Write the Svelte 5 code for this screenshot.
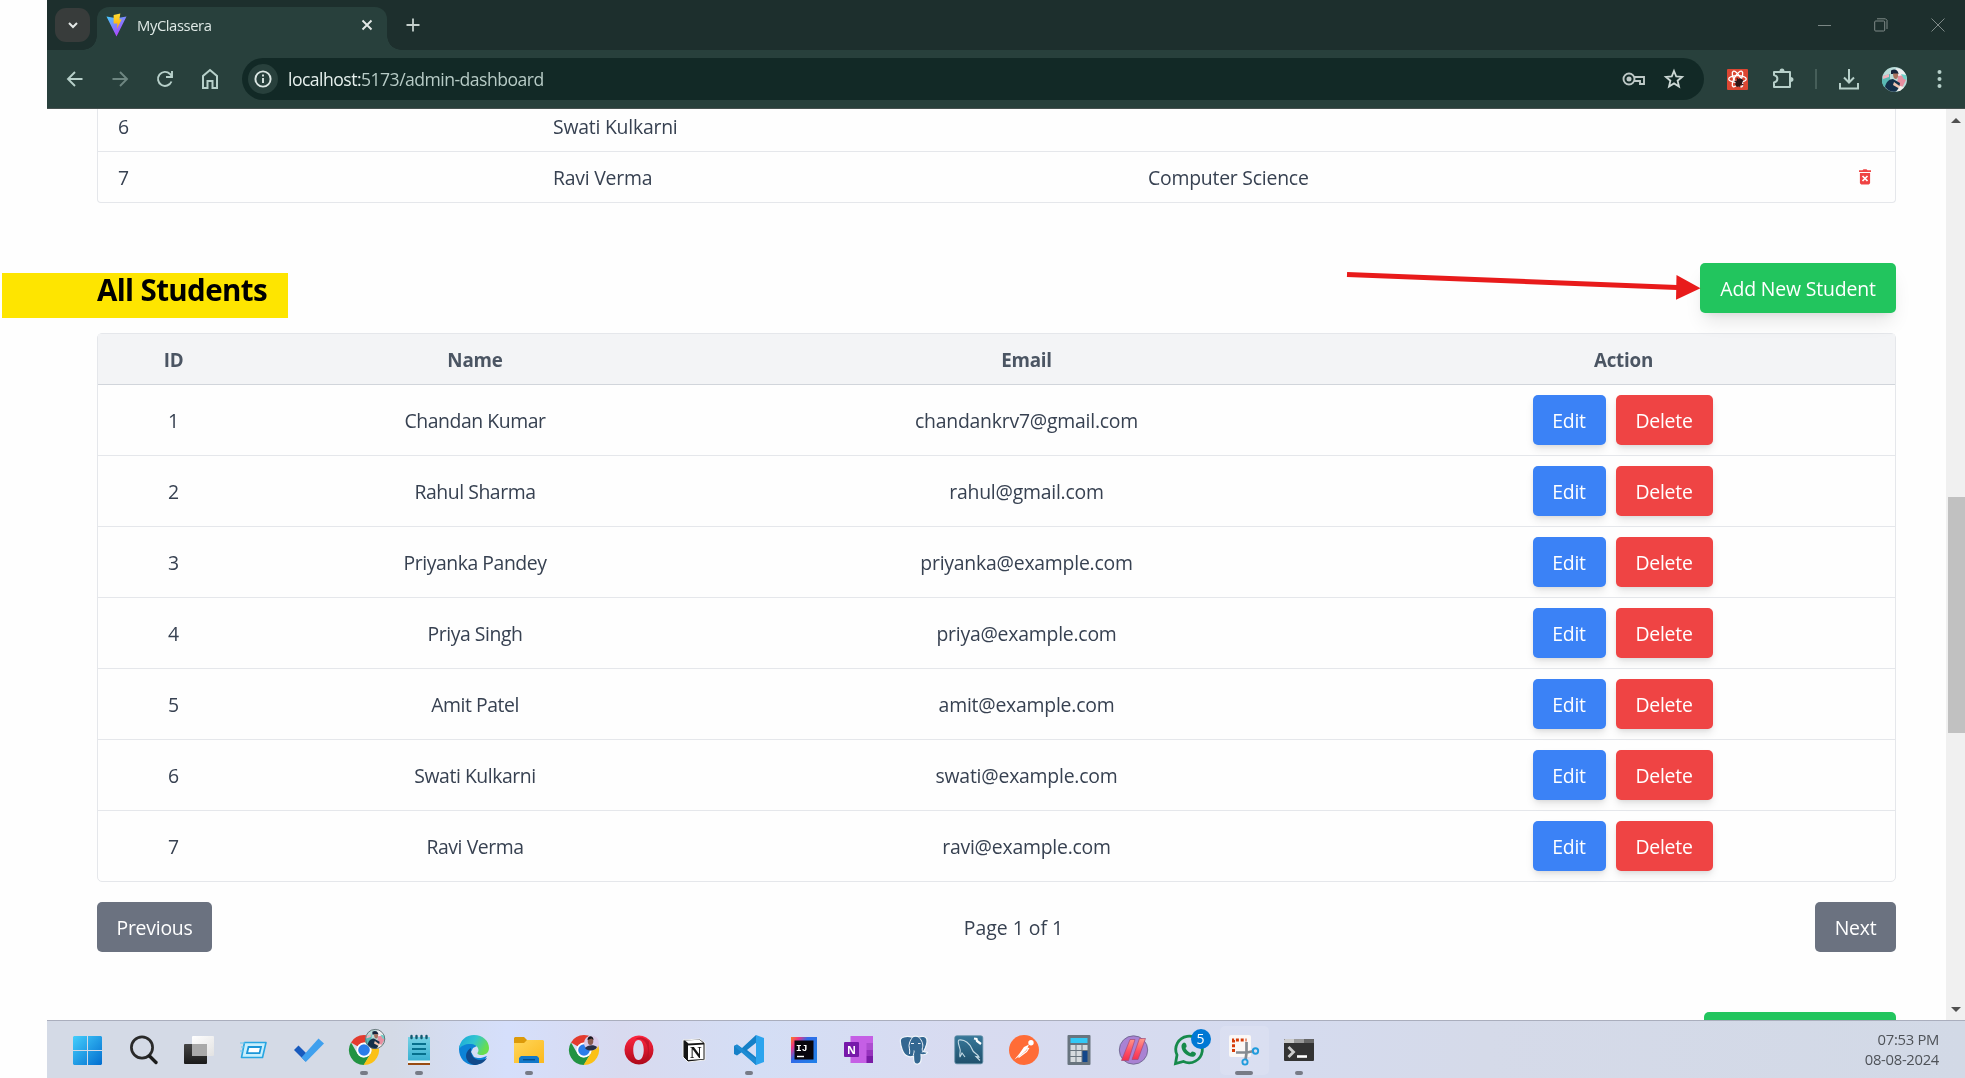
<script>
  const students = [
    { id: 1, name: 'Chandan Kumar', email: 'chandankrv7@gmail.com' },
    { id: 2, name: 'Rahul Sharma', email: 'rahul@gmail.com' },
    { id: 3, name: 'Priyanka Pandey', email: 'priyanka@example.com' },
    { id: 4, name: 'Priya Singh', email: 'priya@example.com' },
    { id: 5, name: 'Amit Patel', email: 'amit@example.com' },
    { id: 6, name: 'Swati Kulkarni', email: 'swati@example.com' },
    { id: 7, name: 'Ravi Verma', email: 'ravi@example.com' }
  ];

  const apps = [
    { icon: 'start' },
    { icon: 'search' },
    { icon: 'taskview' },
    { icon: 'run' },
    { icon: 'todo' },
    { icon: 'chromeA', open: true },
    { icon: 'notepad', open: true },
    { icon: 'edge' },
    { icon: 'folder', open: true },
    { icon: 'chromeB' },
    { icon: 'opera' },
    { icon: 'notion' },
    { icon: 'vscode', open: true },
    { icon: 'idea' },
    { icon: 'onenote' },
    { icon: 'postgres' },
    { icon: 'mysql' },
    { icon: 'postman' },
    { icon: 'calc' },
    { icon: 'slashes' },
    { icon: 'whatsapp' },
    { icon: 'snip', open: true, active: true },
    { icon: 'terminal', open: true }
  ];
</script>

{#snippet chrome()}
  <path d="M15 0A15 15 0 0 1 28 7.500H15L8.500 11.300 2 7.500A15 15 0 0 1 15 0Z" fill="#e33b2e" />
  <path d="M2 7.500 8.500 18.800A7.500 7.500 0 0 0 15 22.500L15 30A15 15 0 0 1 2 7.500Z" fill="#229342" />
  <path d="M15 22.500 21.500 18.800 15 30Z" fill="#229342" />
  <path d="M28 7.500A15 15 0 0 1 14.600 30L21.500 18.800A7.500 7.500 0 0 0 21.500 11.200L15 7.500Z" fill="#fbc116" />
  <circle cx="15" cy="15" r="7.500" fill="#fff" />
  <circle cx="15" cy="15" r="5.800" fill="#2b7de9" />
{/snippet}

{#snippet portrait()}
  <circle cx="12.500" cy="12.500" r="12.500" fill="#b9dcd9" />
  <path d="M14 1a12 12 0 0 1 10 7l-8 3Z" fill="#f0eef0" />
  <path d="M1 9 8 7v10l-6 3A12 12 0 0 1 1 9Z" fill="#59b9b4" />
  <path d="M1 9 7 7v3l-6 2Z" fill="#f2b3bd" />
  <path d="M16 9l6-1 2 5-4 8-5-3Z" fill="#e78fa0" />
  <path d="m19 7 5 1 .8 5-3-1Z" fill="#72d1c9" />
  <path d="M9 3.500c3-2 6-1 7 1.500l.5 2H9Z" fill="#17243b" />
  <path d="M11 6.500h5c.5 4-1 5.500-2.500 5.500s-2.500-2.500-2.500-5.500Z" fill="#a8735f" />
  <path d="M3 20c1-5 4-8 8-8l7 4-1 5-3 3.500c-4 .9-8-.5-11-4.500Z" fill="#15304a" />
  <path d="m12 15 7 5-1 2-7-4Z" fill="#f0c5b2" />
  <path d="m18 19 4 1-4 4h-3Z" fill="#f4efeb" />
{/snippet}

{#snippet appIcon(name)}
  <svg viewBox="0 0 30 30" width="30" height="30">
    {#if name === 'start'}
      <defs>
        <linearGradient id="win" gradientUnits="userSpaceOnUse" x1="0" y1="0" x2="29" y2="29">
          <stop offset="0" stop-color="#45d0fd" /><stop offset="1" stop-color="#036fd0" />
        </linearGradient>
      </defs>
      <path d="M0 2 1 1h13v14H0ZM15 1h13l1 1v13H15ZM0 16h14v14H1l-1-1ZM15 16h14v13l-1 1H15Z" fill="url(#win)" />
    {:else if name === 'search'}
      <circle cx="13" cy="12.500" r="10.600" fill="none" stroke="#2a2a2a" stroke-width="2.700" />
      <path d="m20.500 21 6.500 6.500" stroke="#1c1c1c" stroke-width="3.400" stroke-linecap="round" />
    {:else if name === 'taskview'}
      <defs>
        <linearGradient id="tvDark" x1="0" y1="0" x2="0" y2="1"><stop offset="0" stop-color="#454545" /><stop offset="1" stop-color="#1a1a1a" /></linearGradient>
        <linearGradient id="tvLight" x1="0" y1="0" x2="1" y2="1"><stop offset="0" stop-color="#fff" /><stop offset="1" stop-color="#e2e2e2" /></linearGradient>
      </defs>
      <rect x="0" y="9" width="23" height="20" rx="1" fill="url(#tvDark)" />
      <rect x="8" y="1" width="22" height="20" rx="1" fill="url(#tvLight)" />
      <rect x="8" y="9" width="15" height="12" fill="#a9a9a9" />
    {:else if name === 'run'}
      <path d="M5.500 7.500h21.500l-3.500 15H2.500Z" fill="#c8effd" stroke="#27a6e2" stroke-width="1.600" stroke-linejoin="round" />
      <path d="M9.500 12h12.500l-1.500 6.200H8Z" fill="#fff" stroke="#1b96d8" stroke-width="1.800" />
      <path d="M1 8h5M2 12h3M1 16h3" stroke="#69c7ef" stroke-width="1.200" />
    {:else if name === 'todo'}
      <path d="m0 15 4.500-4.500 11.500 11.500-4.500 4.500Z" fill="#185abd" />
      <path d="M7.500 22.500 24.500 3.500 30 8.500 11.800 27Z" fill="#3fa0ee" />
    {:else if name === 'chromeA'}
      {@render chrome()}
      <g transform="translate(16.200 -6) scale(.8)">{@render portrait()}
        <circle cx="12.500" cy="12.500" r="12" fill="none" stroke="#555e66" stroke-width="1" /></g>
    {:else if name === 'chromeB'}
      {@render chrome()}
      <circle cx="22.500" cy="8" r="7.500" fill="#d8cbe8" />
      <ellipse cx="21.500" cy="6" rx="2.800" ry="4" fill="#8d5c50" />
      <path d="M18.500 5c0-5 6-5 6 0l-2-1.500Z" fill="#15151c" />
      <path d="M16 13c2-3 9-4 12-1-1 4-9 5-12 1Z" fill="#292f45" />
    {:else if name === 'notepad'}
      <defs><linearGradient id="np" x1="0" y1="0" x2="0" y2="1"><stop offset="0" stop-color="#76d2e5" /><stop offset="1" stop-color="#35aed0" /></linearGradient></defs>
      <path d="M4 2h22v25H4Z" fill="url(#np)" />
      <path d="M4 25.500h22V28H4Z" fill="#f4f4f1" /><path d="M4 28h22v2H4Z" fill="#984b13" />
      <path d="M8 9h14M8 14h14M8 19h14" stroke="#06708d" stroke-width="1.800" />
      <path d="M7.500 1v2M12.500 1v2M17.500 1v2M22.500 1v2" stroke="#145a71" stroke-width="2.400" stroke-linecap="round" />
    {:else if name === 'edge'}
      <defs>
        <linearGradient id="edgeTop" x1="0" y1="0" x2="1" y2=".4">
          <stop offset="0" stop-color="#17a6dd" /><stop offset=".55" stop-color="#32c5cf" /><stop offset="1" stop-color="#68de4d" />
        </linearGradient>
      </defs>
      <path d="M0 14C0 8 6 4 13 7l5 4-4 2-2 4 3 5c5 2 8 1 13-1-3 6-8 9-13 9C6 30 0 23 0 14Z" fill="#0c83d7" />
      <path d="M0 14C1 5 7 0 15 0c9 0 15 6 15 13 0 5-4 7-7 7-5 0-5-2-4-3 2-3-2-9-8-8-5 0-9 2-11 5Z" fill="url(#edgeTop)" />
      <path d="M12 13c-1 7 3 12 9 12 3 0 5-1 7-2-3 5-8 7-13 7C5 27 5 17 12 13Z" fill="#114a8b" />
    {:else if name === 'folder'}
      <defs><linearGradient id="fold" x1="0" y1="0" x2="1" y2="1"><stop offset="0" stop-color="#ffd65a" /><stop offset="1" stop-color="#fcb91d" /></linearGradient></defs>
      <path d="M0 3 1 2h9l3 3v5H0Z" fill="#dc9a0a" />
      <path d="M0 8h10l3-3h16l1 1v22H0Z" fill="url(#fold)" />
      <path d="M5 28v-5l2-2h16l2 2v5Z" fill="#1279ca" /><path d="M9 24.700h12" stroke="#064c87" stroke-width="1.300" />
    {:else if name === 'opera'}
      <defs>
        <linearGradient id="op" x1="0" y1="0" x2="0" y2="1"><stop offset="0" stop-color="#ff2741" /><stop offset="1" stop-color="#ad0819" /></linearGradient>
      </defs>
      <path fill-rule="evenodd" d="M15 .5a14.500 14.500 0 1 1-.01 0ZM14.500 5C7.500 5 7.500 25 14.500 25S21.500 5 14.500 5Z" fill="url(#op)" />
      <path d="M11 4.500c4-4 10-2 14 2v17c-4 4-9 6-14 2 9 3 13-4 13-10S20 2 11 4.500Z" fill="#b50f24" opacity=".65" />
    {:else if name === 'notion'}
      <path d="m4 5 17-1 5 4v17l-17 2-5-5Z" fill="#161616" stroke="#f5f5f5" stroke-width="1" />
      <path d="m6 5.500 14.500-.8 3.500 3-14.500.8Z" fill="#fff" /><path d="M9 10.500 24.500 9.500v14.500L9 25Z" fill="#fff" />
      <text x="16.800" y="22.700" text-anchor="middle" font-family="Liberation Serif, serif" font-weight="bold" font-size="16" fill="#161616">N</text>
    {:else if name === 'vscode'}
      <path d="M22 0 8 13 3 9.500 0 11v8l3 1.500L8 17l14 13 1-7-10-8 10-8Z" fill="#1580c7" />
      <path d="M0 11 3 9.500 23 25l-1 5Z" fill="#1d8bd3" />
      <path d="m22 0 8 3v24l-8 3Z" fill="#2ba4ee" />
    {:else if name === 'idea'}
      <defs>
        <linearGradient id="ij" x1="0" y1="0" x2="1" y2=".7"><stop offset="0" stop-color="#fc801d" /><stop offset=".22" stop-color="#ec3384" /><stop offset=".45" stop-color="#316be8" /><stop offset="1" stop-color="#227ee8" /></linearGradient>
      </defs>
      <path d="M2 2h26v26H2Z" fill="url(#ij)" /><path d="M5.500 5.500h19v19h-19Z" fill="#08050d" />
      <text x="7" y="15.500" font-family="Liberation Mono, monospace" font-weight="bold" font-size="9.500" fill="#fff">IJ</text>
      <path d="M8 21.500h7" stroke="#fff" stroke-width="1.400" />
    {:else if name === 'onenote'}
      <path d="M6.500 1H29v27H6.500Z" fill="#c55fe5" /><path d="M22.500 8H29v7h-6.500Z" fill="#ad4dd0" /><path d="M22.500 15H29v6h-6.500Z" fill="#9633bd" /><path d="M22.500 21H29v7h-6.500Z" fill="#791ca5" />
      <rect x="0" y="7" width="15" height="15" rx="1" fill="#7719aa" />
      <text x="7.500" y="18.500" text-anchor="middle" font-family="Open Sans, sans-serif" font-weight="bold" font-size="11" fill="#fff">N</text>
    {:else if name === 'postgres'}
      <path d="M5 2c3-1 6-.5 8 .2C15 1 18 1 20 2c3-1.500 7-.5 7.800 2 .8 3-1.300 9-3.300 12.500l4 1c-1 2-4 2.500-6.500 2 .5 4 0 9-3 9.500-4 .5-4.500-2-4.500-8-2 1-4.500 1-6 0C4 20 1.500 11 1.300 6 1.200 4 3 2.500 5 2Z" fill="#336791" stroke="#f1f5fb" stroke-width="1.200" />
      <path d="M10.500 19c1-4-1.500-8 0-11 .5-2 1.500-4 3-5.500M20 2.500c3 3 4.500 7 3.500 10-.8 2.500.5 3.500-.3 5M14.500 20c0-2 1-3 .5-4.500" fill="none" stroke="#f1f5fb" stroke-width="1" />
      <path d="M12 8.500h3M19 8.500h2.500" stroke="#f1f5fb" stroke-width="1.200" />
    {:else if name === 'mysql'}
      <defs><linearGradient id="my" x1="0" y1="0" x2="0" y2="1"><stop offset="0" stop-color="#38789a" /><stop offset="1" stop-color="#20506c" /></linearGradient></defs>
      <rect x=".8" y=".8" width="28" height="28" rx="2" fill="url(#my)" stroke="#5d8ba3" stroke-width=".8" />
      <path d="M6 22c-1-3 1-5 0-8C5 10 3 6 5 5c6-1 11 4 13 9 1 4 5 4 7 8l-3-.5 4 4M6 22l2-4 3 4" fill="none" stroke="#c6dbe5" stroke-width="1.100" />
      <path d="m20 3.500 2.500.5.500 2 4 3" stroke="#fff" stroke-width="2.200" fill="none" />
    {:else if name === 'postman'}
      <circle cx="15" cy="15" r="15" fill="#ff6c37" />
      <circle cx="22" cy="7.700" r="2.700" fill="#fff" /><path d="m20 9.500-5 2.500-4.500 6.500-5 6 7-5 5-4.500Z" fill="#fff" /><path d="m15 12.500 4.500 1-2 3-8 6" fill="none" stroke="#fff" stroke-width="1.200" />
    {:else if name === 'calc'}
      <rect x="3.500" y="0" width="23" height="30" rx="1" fill="#68747e" /><path d="M6.500 3h17v5h-17Z" fill="#33c9f5" />
      <path d="M6.500 10h5v5h-5Zm6 0h5v5h-5Zm6 0h5v5h-5Zm-12 6h5v5h-5Zm6 0h5v5h-5Zm-6 6h5v5h-5Zm6 0h5v5h-5Z" fill="#d5dade" /><path d="M18.500 16h5v11h-5Z" fill="#12468a" />
    {:else if name === 'slashes'}
      <defs><linearGradient id="sl" x1="0" y1="0" x2="0" y2="1"><stop offset="0" stop-color="#ff9a8c" /><stop offset=".6" stop-color="#ff4d62" /><stop offset="1" stop-color="#f3304f" /></linearGradient></defs>
      <circle cx="14.500" cy="15" r="14.200" fill="#a982d3" stroke="#666087" stroke-width=".8" />
      <path d="M11 4.500h5L9.500 25.500H2.500ZM20.500 3.500h6L19 24.500h-6Z" fill="url(#sl)" stroke="#a44a78" stroke-width=".7" />
    {:else if name === 'whatsapp'}
      <path d="M3 20A13.300 13.300 0 1 1 9.500 26.500L1.500 28.500Z" fill="none" stroke="#168a4b" stroke-width="2.800" />
      <path d="M10 7.500c2 0 3 3 2.500 4.500l-1 1c1 2.500 3 4 5 5l1.500-1.500c2 0 4 1 4 2.500-1 3-4 3.500-7 2-4-1.500-7-5-7.500-9-.2-2 .7-4 2.500-4.500Z" fill="#168a4b" />
    {:else if name === 'snip'}
      <rect x="0" y="0" width="22" height="22" rx="2" fill="#fbf8f6" />
      <path d="M4.500 17V5h13" fill="none" stroke="#d63b07" stroke-width="3" stroke-dasharray="3 1.800" />
      <path d="M17.500 7v11l-1 7M7 17.500h11l7-1.500" fill="none" stroke="#858b91" stroke-width="2.700" />
      <circle cx="26.500" cy="16" r="2.700" fill="none" stroke="#209cdd" stroke-width="1.900" /><circle cx="16" cy="27" r="2.600" fill="none" stroke="#209cdd" stroke-width="1.900" />
    {:else if name === 'terminal'}
      <rect x="0" y="4" width="30" height="22" rx="1" fill="#333" />
      <path d="M0 8V5l1-1h9v4Z" fill="#ccc" /><path d="M10 4h10v4H10Z" fill="#999" /><path d="M20 4h9l1 1v3H20Z" fill="#666" />
      <path d="m4.500 12 5 5-5 5" fill="none" stroke="#ccc" stroke-width="2.800" /><path d="M13 21.500h10" stroke="#fff" stroke-width="2.600" />
    {/if}
  </svg>
{/snippet}

<div class="screen">
  <div class="desktop">
    <header class="tabstrip">
      <button class="tabsearch" aria-label="Search tabs">
        <svg width="12" height="12" viewBox="0 0 12 12"><path d="m2 4 4 4 4-4" fill="none" stroke="#e4e9e7" stroke-width="2" /></svg>
      </button>
      <div class="tab">
        <svg width="21" height="24" viewBox="0 0 22 24">
          <defs>
            <linearGradient id="viteA" x1="0" y1="0" x2=".7" y2="1"><stop offset="0" stop-color="#41d1ff" /><stop offset="1" stop-color="#bd34fe" /></linearGradient>
            <linearGradient id="viteB" x1="0" y1="0" x2="0" y2="1"><stop offset="0" stop-color="#ffdd35" /><stop offset="1" stop-color="#ffa800" /></linearGradient>
          </defs>
          <path d="M.5 3 11 5l10.500-2L11 24Z" fill="url(#viteA)" />
          <path d="m8 1.500 7-1.500-1 6.500 2.500-.5-5 10 .5-5.500H8Z" fill="url(#viteB)" />
        </svg>
        <span class="tabtitle">MyClassera</span>
        <svg class="tabclose" width="12" height="12" viewBox="0 0 12 12"><path d="m1.500 1.500 9 9M10.500 1.500l-9 9" stroke="#e4e9e7" stroke-width="1.900" /></svg>
      </div>
      <svg class="newtab" width="14" height="14" viewBox="0 0 14 14"><path d="M7 .5v13M.5 7h13" stroke="#c5d0cc" stroke-width="1.800" /></svg>
      <div class="wincontrols">
        <svg width="14" height="14" viewBox="0 0 14 14"><path d="M1 7.500h13" stroke="#7b8785" /></svg>
        <svg width="14" height="14" viewBox="0 0 14 14" fill="none" stroke="#7f8a88"><rect x=".7" y="3" width="10" height="10" rx="1" /><path d="M3 .8h8.500l1.500 1.500V11" /></svg>
        <svg width="14" height="14" viewBox="0 0 14 14"><path d="m.5.5 13 13M13.500.5l-13 13" stroke="#7f8a88" /></svg>
      </div>
    </header>

    <div class="toolbar">
      <div class="nav">
        <svg width="20" height="20" viewBox="0 0 20 20" fill="none" stroke="#b7d0ca" stroke-width="1.900"><path d="M17.500 10H3.500M10 3l-7 7 7 7" /></svg>
        <svg width="20" height="20" viewBox="0 0 20 20" fill="none" stroke="#6e8681" stroke-width="1.900"><path d="M2.500 10h14M10 3l7 7-7 7" /></svg>
        <svg width="20" height="20" viewBox="0 0 20 20" fill="none" stroke="#b7d0ca" stroke-width="1.900"><path d="M16.500 12.500A7 7 0 1 1 15 5l2 2.500" /><path d="M17 2v6h-6" /></svg>
        <svg width="20" height="22" viewBox="0 0 20 22" fill="none" stroke="#b7d0ca" stroke-width="2"><path d="M3 20V8l7-6 7 6v12h-4.500v-7h-5v7Z" /></svg>
      </div>
      <div class="omnibox">
        <span class="siteinfo">
          <svg width="18" height="18" viewBox="0 0 18 18"><circle cx="9" cy="9" r="7.600" fill="none" stroke="#dce7e4" stroke-width="1.900" /><path d="M9 8v5M9 4.500v2" stroke="#dce7e4" stroke-width="1.900" /></svg>
        </span>
        <span class="url"><b>localhost:</b>5173/admin-dashboard</span>
        <svg class="key" width="24" height="16" viewBox="0 0 24 16"><circle cx="7" cy="8" r="5.500" fill="none" stroke="#bdc8c6" stroke-width="1.900" /><circle cx="7" cy="8" r="2.500" fill="#bdc8c6" /><path d="M12 6h10v7h-4v-3h-6" fill="none" stroke="#bdc8c6" stroke-width="1.900" /></svg>
        <svg width="20" height="20" viewBox="0 0 20 20"><path d="m10 2 2.200 5.400 5.900.5-4.500 3.800 1.400 5.800L10 14.400l-5 3.100 1.400-5.800L1.900 7.900l5.900-.5Z" fill="none" stroke="#ccd8d5" stroke-width="1.800" /></svg>
      </div>
      <div class="exts">
        <svg width="21" height="21" viewBox="0 0 21 21">
          <rect width="21" height="21" rx="1" fill="#dc4632" />
          <g fill="none" stroke="#fff" stroke-width="1.300"><ellipse cx="10.500" cy="10" rx="8.800" ry="3.300" /><ellipse cx="10.500" cy="10" rx="8.800" ry="3.300" transform="rotate(60 10.500 10)" /><ellipse cx="10.500" cy="10" rx="8.800" ry="3.300" transform="rotate(120 10.500 10)" /></g>
          <ellipse cx="12" cy="13.500" rx="3" ry="4.500" fill="#2d1719" transform="rotate(35 12 13.500)" /><path d="m7.500 12 9 4M9 17l7-6M10 9l3 9" stroke="#2d1719" stroke-width="1.200" />
        </svg>
        <svg class="puzzle" width="22" height="22" viewBox="0 0 22 22"><path d="M2 4h16v15H2v-4.500c4.500-1 4.500-6.500 0-7.500Z" fill="none" stroke="#b7d0ca" stroke-width="2" stroke-linejoin="round" /><path d="M7.500 3.500a2.500 3 0 0 1 5 0ZM18.500 9a3 2.500 0 0 1 0 5Z" fill="#b7d0ca" /></svg>
        <i class="sep"></i>
        <svg class="download" width="22" height="22" viewBox="0 0 22 22" fill="none" stroke="#b7d0ca" stroke-width="2"><path d="M11 1v13M6 9.500l5 5 5-5M2 15v5.500h18V15" /></svg>
        <svg class="avatar" width="25" height="25" viewBox="0 0 25 25">{@render portrait()}</svg>
        <svg class="kebab" width="5" height="20" viewBox="0 0 5 20" fill="#b7d0ca"><circle cx="2.500" cy="3" r="2" /><circle cx="2.500" cy="10" r="2" /><circle cx="2.500" cy="17" r="2" /></svg>
      </div>
    </div>

    <div class="viewport">
      <main>
        <div class="teachers">
          <div class="trow"><span>6</span><span>Swati Kulkarni</span><span></span><span></span></div>
          <div class="trow"><span>7</span><span>Ravi Verma</span><span>Computer Science</span>
            <span class="trash"><svg width="12" height="16" viewBox="0 0 12 16"><path d="M0 1.300h3.500L4.500.3h3l1 1H12V3H0ZM.9 4h10.200v10.200L9.800 15.500H2.200L.9 14.200Z" fill="#ef4444" /><path d="m3.500 7 5 5M8.500 7l-5 5" stroke="#fff" stroke-width="1.700" /></svg></span>
          </div>
        </div>

        <div class="heading">
          <h2>All Students</h2>
          <button class="btn green">Add New Student</button>
        </div>

        <div class="students">
          <div class="srow head"><span>ID</span><span>Name</span><span>Email</span><span>Action</span></div>
          {#each students as s (s.id)}
            <div class="srow">
              <span>{s.id}</span><span class="name">{s.name}</span><span>{s.email}</span>
              <span class="actions"><button class="btn blue">Edit</button><button class="btn red">Delete</button></span>
            </div>
          {/each}
        </div>

        <div class="pager">
          <button class="btn gray prev">Previous</button>
          <span class="page">Page 1 of 1</span>
          <button class="btn gray next">Next</button>
        </div>

        <div class="nextsection"><button class="btn green peek" aria-label="Add"></button></div>
      </main>
      <div class="scrollbar">
        <i class="up"></i>
        <i class="thumb"></i>
        <i class="down"></i>
      </div>
    </div>

    <footer class="taskbar">
      <div class="apps">
        {#each apps as app}
          <div class="app" class:active={app.active}>
            {@render appIcon(app.icon)}
            {#if app.icon === 'whatsapp'}<span class="badge">5</span>{/if}
            {#if app.open}<i class="dot"></i>{/if}
          </div>
        {/each}
      </div>
      <div class="clock"><span class="time">07:53 PM</span><span class="date">08-08-2024</span></div>
    </footer>
  </div>

  <div class="highlight"></div>
  <svg class="arrow" width="356" height="32" viewBox="0 0 356 32">
    <path d="M0 5.500 330 18.500" stroke="#e81b1b" stroke-width="5" />
    <path d="M329.500 6 353.500 19.300 329 30.700Z" fill="#e81b1b" />
  </svg>
</div>

<style>
  :global(body) { margin: 0; background: #fefefe; overflow: hidden; }
  .screen { position: relative; width: 1965px; height: 1078px; overflow: hidden; font-family: 'Open Sans', 'Noto Sans', sans-serif; color: #374151; }
  .desktop { box-sizing: border-box; height: 100%; padding-left: 47px; display: flex; flex-direction: column; }
  button { font: inherit; letter-spacing: inherit; border: 0; padding: 0; margin: 0; }
  svg { display: block; flex: none; overflow: visible; }

  .tabstrip { height: 50px; flex: none; background: #1d2f2d; display: flex; align-items: center; padding-left: 8px; }
  .tabsearch { width: 35px; height: 34px; border-radius: 11px; background: #383c3b; display: flex; align-items: center; justify-content: center; }
  .tab { position: relative; box-sizing: border-box; align-self: flex-end; width: 290px; height: 43px; margin-left: 7px; padding: 0 14px 7px 9px; border-radius: 12px 12px 0 0; background: #28403c; display: flex; align-items: center; color: #dfe9e6; }
  .tab::before, .tab::after { content: ''; position: absolute; bottom: 0; width: 14px; height: 14px; }
  .tab::before { left: -14px; background: radial-gradient(circle at 0 0, transparent 13.5px, #28403c 14px); }
  .tab::after { right: -14px; background: radial-gradient(circle at 100% 0, transparent 13.5px, #28403c 14px); }
  .tabtitle { margin-left: 10px; font-size: 14.8px; letter-spacing: -0.42px; }
  .tabclose { margin-left: auto; }
  .newtab { margin-left: 19px; }
  .wincontrols { margin-left: auto; margin-right: 20px; display: flex; gap: 43px; }

  .toolbar { box-sizing: border-box; height: 59px; flex: none; background: #28403c; border-bottom: 1px solid #46504f; display: flex; align-items: center; padding-left: 18px; }
  .nav { display: flex; align-items: center; gap: 25px; width: 177px; }
  .omnibox { box-sizing: border-box; width: 1462px; height: 42px; border-radius: 21px; background: #122926; display: flex; align-items: center; padding: 0 20px 0 6px; }
  .siteinfo { width: 30px; height: 30px; border-radius: 50%; background: #28403c; display: flex; align-items: center; justify-content: center; }
  .url { margin-left: 10px; font-size: 17.6px; color: #b7cbc6; letter-spacing: -0.53px; }
  .url b { font-weight: 400; color: #e6f0ed; }
  .key { margin-left: auto; margin-right: 18px; }
  .exts { display: flex; align-items: center; flex: 1; padding-left: 23px; }
  .puzzle { margin-left: 24px; }
  .sep { width: 2px; height: 20px; margin-left: 21px; background: #465e59; }
  .download { margin-left: 21px; }
  .avatar { margin-left: 22px; }
  .kebab { margin-left: 30px; }

  .viewport { flex: 1; min-height: 0; display: flex; overflow: hidden; }
  main { width: 1799px; padding: 0 50px; font-size: 19.4px; letter-spacing: -0.22px; }
  .teachers { box-sizing: border-box; height: 94px; border: 1px solid #e5e7eb; border-top: 0; border-radius: 0 0 4px 4px; display: flex; flex-direction: column; justify-content: flex-end; overflow: hidden; }
  .trow { box-sizing: border-box; height: 51px; flex: none; display: grid; grid-template-columns: 435px 595px 1fr 60px; align-items: center; padding-left: 20px; border-bottom: 1px solid #e5e7eb; }
  .trow:last-child { border-bottom: 0; height: 50px; }
  .trash { display: flex; justify-content: center; }

  .heading { height: 50px; margin-top: 60px; display: flex; justify-content: space-between; }
  h2 { position: relative; z-index: 2; margin: 5px 0 0; font-size: 29.5px; letter-spacing: -0.62px; line-height: 43px; font-weight: 700; color: #000; }
  .btn { box-sizing: border-box; height: 50px; border-radius: 5px; color: #fff; display: flex; align-items: center; justify-content: center; }
  .green { width: 196px; background: #22c55e; letter-spacing: -0.15px; box-shadow: 0 12px 19px -4px #0000001a, 0 5px 8px -5px #0000001a; }
  .blue { width: 73px; background: #3b82f6; box-shadow: 0 5px 8px -1px #0000001a, 0 2px 5px -2px #0000001a; }
  .red { width: 97px; background: #ef4444; box-shadow: 0 5px 8px -1px #0000001a, 0 2px 5px -2px #0000001a; }
  .gray { background: #6b7280; }
  .prev { width: 115px; }
  .next { width: 81px; }

  .students { box-sizing: border-box; margin-top: 20px; border: 1px solid #e5e7eb; border-radius: 5px; height: 549px; }
  .srow { box-sizing: border-box; height: 71px; display: grid; grid-template-columns: 151px 452px 651px 1fr; align-items: center; text-align: center; border-bottom: 1px solid #e5e7eb; }
  .srow:last-child { border-bottom: 0; height: 70px; }
  .name { letter-spacing: -0.45px; }
  .srow.head { height: 51px; background: #f3f4f6; border-bottom-color: #d1d5db; font-weight: 700; color: #4b5563; font-size: 18.8px; }
  .srow.head > span { padding-top: 1px; }
  .actions { display: flex; justify-content: center; gap: 10px; padding-right: 2px; }

  .pager { margin-top: 20px; display: flex; align-items: center; justify-content: space-between; }
  .page { letter-spacing: 0; }
  .nextsection { margin-top: 60px; display: flex; justify-content: flex-end; }
  .peek { width: 192px; }

  .scrollbar { width: 19px; background: #f0f0f0; display: flex; flex-direction: column; align-items: center; }
  .up { margin-top: 9px; border: 5px solid transparent; border-top: 0; border-bottom-color: #505050; }
  .thumb { margin: 374px 0 0 2px; width: 17px; height: 236px; background: #c1c1c1; }
  .down { margin-top: 274px; border: 5px solid transparent; border-bottom: 0; border-top-color: #505050; }

  .taskbar { box-sizing: border-box; height: 58px; flex: none; border-top: 1px solid #aaaebd; background: linear-gradient(90deg, #d4dae6 0, #d4dae6 18%, #d5dffb 24%, #d8daef 30%, #d4def5 37%, #d8dbf0 48%, #d5dbef 64%, #d5dae9 75%, #d2d9e6 100%); display: flex; justify-content: space-between; }
  .apps { display: flex; padding-left: 14.5px; }
  .app { position: relative; width: 55px; height: 58px; display: flex; align-items: center; justify-content: center; }
  .app:first-child { box-sizing: border-box; padding-right: 2px; }
  .app.active::before { content: ''; position: absolute; inset: 5px 3px 4px; border-radius: 5px; background: #ffffff20; }
  .app svg { position: relative; }
  .badge { position: absolute; left: 29px; top: 8px; width: 20px; height: 20px; border-radius: 50%; background: #0078d4; color: #fff; font-size: 14px; line-height: 20px; text-align: center; }
  .dot { position: absolute; bottom: 4px; width: 8px; height: 4px; border-radius: 2px; background: #777b86; }
  .active .dot { width: 18px; }
  .clock { padding: 8px 26px 0 0; display: flex; flex-direction: column; align-items: flex-end; font-size: 14.8px; letter-spacing: -0.3px; line-height: 20px; color: #4e5258; }

  .highlight { position: absolute; z-index: 1; left: 2px; top: 273px; width: 286px; height: 45px; background: #ffe600; mix-blend-mode: multiply; }
  .arrow { position: absolute; left: 1347px; top: 269px; }
</style>
